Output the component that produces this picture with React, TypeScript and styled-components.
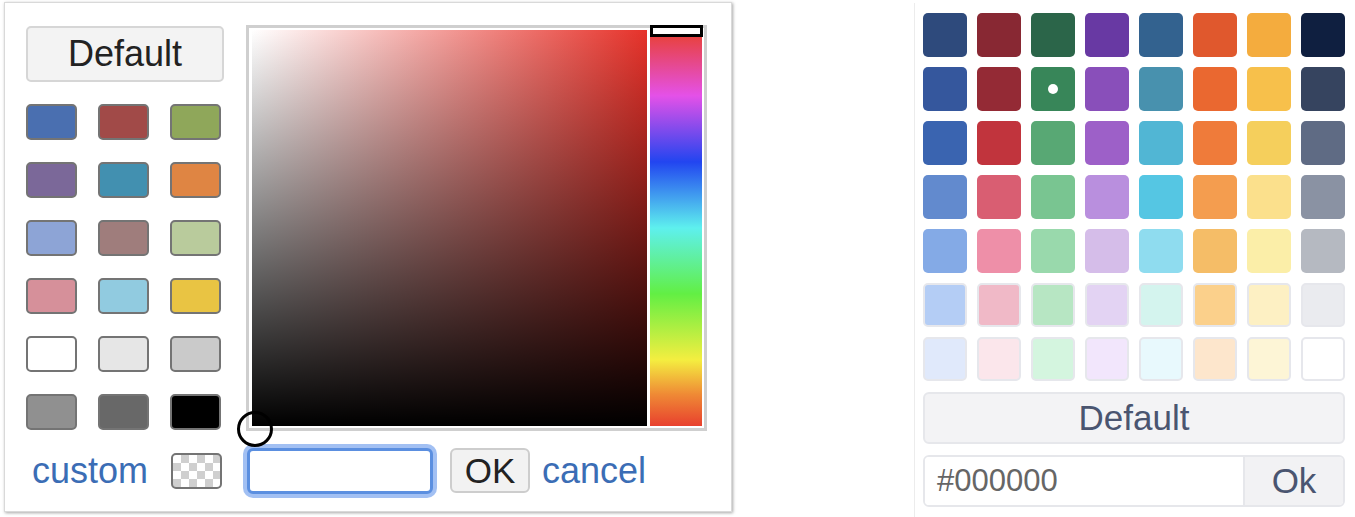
import React from 'react';
import styled, { createGlobalStyle } from 'styled-components';

const GlobalStyle = createGlobalStyle`
  html, body {
    margin: 0;
    padding: 0;
    background: #ffffff;
    font-family: "Liberation Sans", Arial, sans-serif;
  }
`;

const Page = styled.div`
  display: flex;
  align-items: flex-start;
  width: 1355px;
  height: 517px;
  overflow: hidden;
`;

// ---- left: classic picker ----

const ClassicPanel = styled.div`
  margin: 2px 0 0 4px;
  width: 683px;
  padding: 22px 22px 14px 21px;
  background: #fff;
  border: 1px solid #d9d9d9;
  box-shadow: 1px 1px 3px rgba(0, 0, 0, 0.35);
  display: grid;
  grid-template-columns: 198px 461px;
  column-gap: 22px;
  row-gap: 13px;
`;

const LeftColumn = styled.div`
  display: flex;
  flex-direction: column;
  gap: 22px;
  padding-top: 1px;
`;

const DefaultButton = styled.button`
  height: 56px;
  width: 198px;
  background: #f3f3f3;
  border: 2px solid #d6d6d6;
  border-radius: 5px;
  font-family: inherit;
  font-size: 36px;
  color: #222;
  padding: 0;
`;

const ClassicGrid = styled.div`
  display: grid;
  grid-template-columns: repeat(3, 51px);
  grid-auto-rows: 36px;
  column-gap: 21px;
  row-gap: 22px;
`;

const ClassicSwatch = styled.div<{ $color: string }>`
  box-sizing: border-box;
  background: ${p => p.$color};
  border: 2px solid #747474;
  border-radius: 5px;
`;

const Checker = styled.div`
  box-sizing: border-box;
  width: 51px;
  height: 36px;
  border: 2px solid #747474;
  border-radius: 5px;
  background-color: #fff;
  background-image:
    linear-gradient(45deg, #cfcfcf 25%, transparent 25%, transparent 75%, #cfcfcf 75%),
    linear-gradient(45deg, #cfcfcf 25%, transparent 25%, transparent 75%, #cfcfcf 75%);
  background-size: 16px 16px;
  background-position: 0 0, 8px 8px;
`;

const Picker = styled.div`
  position: relative;
  box-sizing: border-box;
  width: 461px;
  height: 406px;
  border: 3px solid #cfcfcf;
  padding: 2px 2px 2px 3px;
  display: flex;
  gap: 3px;
  background: #fff;
`;

const SatVal = styled.div<{ $hue: string }>`
  flex: 1;
  background:
    linear-gradient(to top, #000, rgba(0, 0, 0, 0)),
    linear-gradient(to right, #fff, ${p => p.$hue});
`;

const HueBar = styled.div`
  width: 52px;
  background: linear-gradient(
    to bottom,
    #e8402e 0%,
    #e451e8 16.6%,
    #2245f0 33.3%,
    #5ef0ee 50%,
    #62ef44 66.6%,
    #f4ee40 83.3%,
    #ef8a35 92%,
    #e8402e 100%
  );
`;

const HueHandle = styled.div`
  position: absolute;
  top: -3px;
  left: 401px;
  box-sizing: border-box;
  width: 53px;
  height: 12px;
  background: #fff;
  border: 3px solid #000;
`;

const Cursor = styled.div`
  position: absolute;
  left: -12px;
  bottom: -19px;
  box-sizing: border-box;
  width: 36px;
  height: 36px;
  border-radius: 50%;
  border: 3px solid #000;
`;

const FooterLeft = styled.div`
  display: flex;
  align-items: center;
  justify-content: space-between;
  padding-left: 6px;
  padding-right: 2px;
`;

const FooterRight = styled.div`
  display: flex;
  align-items: center;
  height: 53px;
  margin-left: -3px;
`;

const LinkText = styled.span`
  color: #3b6db5;
  font-size: 36px;
`;

const HexField = styled.input`
  box-sizing: border-box;
  width: 186px;
  height: 46px;
  margin: 0 17px 0 4px;
  border: 3px solid #5b8fe0;
  border-radius: 6px;
  box-shadow: 0 0 0 4px rgba(100, 150, 235, 0.6);
  background: #fff;
  outline: none;
`;

const OkButton = styled.button`
  width: 80px;
  height: 45px;
  margin-right: 12px;
  background: #f2f2f2;
  border: 2px solid #cdcdcd;
  border-radius: 6px;
  font-family: inherit;
  font-size: 35px;
  color: #222;
  padding: 0;
`;

// ---- right: palette picker ----

const PalettePanel = styled.div`
  margin-left: auto;
  margin-top: 3px;
  width: 422px;
  height: 514px;
  padding: 10px 10px 0 8px;
  border-left: 1px solid #ececec;
  display: flex;
  flex-direction: column;
  gap: 11px;
`;

const PaletteGrid = styled.div`
  display: grid;
  grid-template-columns: repeat(8, 44px);
  grid-auto-rows: 44px;
  gap: 10px;
`;

const PaletteSwatch = styled.div<{ $color: string; $light?: boolean }>`
  position: relative;
  box-sizing: border-box;
  background: ${p => p.$color};
  border-radius: 5px;
  border: ${p => (p.$light ? '2px solid #e6e7ec' : 'none')};
  display: flex;
  align-items: center;
  justify-content: center;
`;

const Dot = styled.span`
  width: 10px;
  height: 10px;
  border-radius: 50%;
  background: #fff;
`;

const PaletteDefault = styled.button`
  height: 52px;
  width: 422px;
  background: #f3f3f5;
  border: 2px solid #e6e7eb;
  border-radius: 6px;
  font-family: inherit;
  font-size: 35px;
  color: #4a5570;
  padding: 0;
`;

const HexRow = styled.div`
  box-sizing: border-box;
  display: flex;
  width: 422px;
  height: 52px;
  border: 2px solid #e6e7eb;
  border-radius: 6px;
  overflow: hidden;
`;

const HexInput = styled.div`
  flex: 1;
  background: #fff;
  color: #666;
  font-size: 31px;
  display: flex;
  align-items: center;
  padding-left: 12px;
`;

const HexOk = styled.div`
  width: 98px;
  background: #f2f2f4;
  border-left: 2px solid #e6e7eb;
  color: #4a5570;
  font-size: 35px;
  display: flex;
  align-items: center;
  justify-content: center;
`;

const classicColors = [
  '#4a6fb0', '#a14a48', '#8fa75a',
  '#7b6899', '#4290b0', '#df8543',
  '#8da4d6', '#9f7d7c', '#b9cb9c',
  '#d6909a', '#91cbe0', '#e9c443',
  '#ffffff', '#e6e6e6', '#cacaca',
  '#909090', '#686868', '#000000',
];

const paletteRows = [
  ['#2e4a7c', '#882833', '#2b6549', '#6839a3', '#33628f', '#e0582d', '#f4ac3e', '#0f1f40'],
  ['#35579d', '#942a35', '#388659', '#894fba', '#4891ae', '#ea6830', '#f7c04b', '#36445f'],
  ['#3a64b0', '#c1343d', '#58a874', '#9d60c8', '#51b6d4', '#ef7b3a', '#f5cf5c', '#5f6b84'],
  ['#628ace', '#d95e72', '#79c591', '#b98fde', '#55c6e3', '#f49d4f', '#fbe08c', '#8a92a3'],
  ['#84aae6', '#ee8fa8', '#99d9ac', '#d5bde9', '#8fdcef', '#f5bd67', '#fbeea8', '#b5b9c1'],
  ['#b4cdf5', '#f0b9c7', '#b7e6c3', '#e3d3f3', '#d4f4ee', '#fbd08b', '#fdf0c3', '#eaebef'],
  ['#e0e9fb', '#fbe6eb', '#d4f5df', '#f2e6fc', '#e8f9fd', '#fde6cc', '#fdf5d6', '#ffffff'],
];

const App: React.FC = () => {
  return (
    <>
      <GlobalStyle />
      <Page>
        <ClassicPanel>
          <LeftColumn>
            <DefaultButton>Default</DefaultButton>
            <ClassicGrid>
              {classicColors.map((c, i) => (
                <ClassicSwatch key={i} $color={c} />
              ))}
            </ClassicGrid>
          </LeftColumn>
          <Picker>
            <SatVal $hue="#e6322a" />
            <HueBar />
            <HueHandle />
            <Cursor />
          </Picker>
          <FooterLeft>
            <LinkText>custom</LinkText>
            <Checker />
          </FooterLeft>
          <FooterRight>
            <HexField readOnly />
            <OkButton>OK</OkButton>
            <LinkText>cancel</LinkText>
          </FooterRight>
        </ClassicPanel>

        <PalettePanel>
          <PaletteGrid>
            {paletteRows.map((row, r) =>
              row.map((c, i) => (
                <PaletteSwatch key={`${r}-${i}`} $color={c} $light={r >= 5}>
                  {r === 1 && i === 2 && <Dot />}
                </PaletteSwatch>
              ))
            )}
          </PaletteGrid>
          <PaletteDefault>Default</PaletteDefault>
          <HexRow>
            <HexInput>#000000</HexInput>
            <HexOk>Ok</HexOk>
          </HexRow>
        </PalettePanel>
      </Page>
    </>
  );
};

export default App;
